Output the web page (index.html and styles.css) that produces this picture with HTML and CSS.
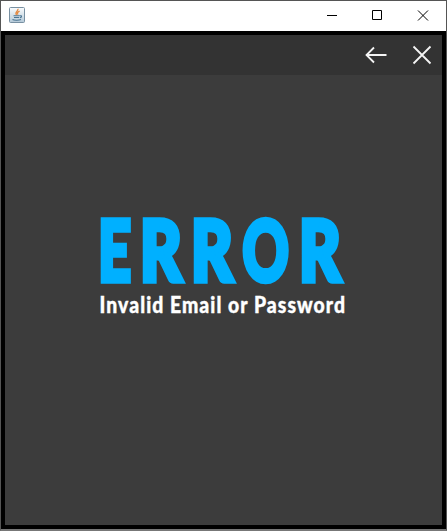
FILE: index.html
```html
<!DOCTYPE html>
<html lang="en">
<head>
<meta charset="utf-8">
<title>Error</title>
<link rel="stylesheet" href="styles.css">
</head>
<body>
<div class="window">
  <header class="titlebar">
    <svg class="app-icon" width="16" height="16" viewBox="0 0 16 16">
      <defs><linearGradient id="g" x2="0" y2="1"><stop stop-color="#fafcfd"/><stop offset="1" stop-color="#b4c9d8"/></linearGradient></defs>
      <rect x=".5" y=".5" width="15" height="15" rx="1" fill="url(#g)" stroke="#7890a2"/>
      <path d="M8.9 1.8C9.8 4 5.2 4.7 7.5 8M10.6 4.2C8 5.3 8 6.1 9 7.6" fill="none" stroke="#e48a42" stroke-width="1.3"/>
      <path d="M4.5 8.8h6.3M5 10.5h5.2M11 8.8c2.2-.5 1.8 1.5 0 2M3.5 12.6c2 1 6.5.8 8.5-.1" fill="none" stroke="#4b7592" stroke-width="1.1"/>
    </svg>
    <svg class="controls" width="110" height="30" viewBox="0 0 110 30" fill="none" stroke="#000">
      <path d="M0 14.5h10M45.5 9.5h9v9h-9zM91 9.500l10 10M101 9.500l-10 10"/>
    </svg>
  </header>
  <main class="panel">
    <nav class="toolbar">
      <svg width="70" height="40" viewBox="0 0 70 40" fill="none" stroke="#f5f5f5" stroke-width="1.8">
        <path d="M21.500 20H1.500M9 12.500L1.500 20l7.500 7.500M48.500 11.500l17 17M65.500 11.500l-17 17"/>
      </svg>
    </nav>
    <section class="message">
      <svg width="250" height="110" viewBox="0 0 250 110">
        <text class="headline" transform="translate(-.7 74.300) scale(.68 1)">E</text>
        <text class="headline" transform="translate(41 74.300) scale(.765 1)" x="0 66.700">RR</text>
        <text class="headline" transform="translate(143.500 74.300) scale(.68 1)">O</text>
        <text class="headline" transform="translate(200 74.300) scale(.765 1)">R</text>
        <text class="detail" transform="translate(.5 106) scale(.88 1)" textLength="279" lengthAdjust="spacing">Invalid Email or Password</text>
      </svg>
    </section>
  </main>
</div>
</body>
</html>
```
FILE: styles.css
```css
* { box-sizing: border-box; }
body { margin: 0; }
.window { width: 447px; height: 531px; border: 1px solid #555; border-bottom: 2px solid #777; background: #000; overflow: hidden; }
.titlebar { height: 30px; background: #fff; display: flex; justify-content: space-between; padding: 0 9px 0 8px; }
.app-icon { margin-top: 6px; }
.panel { margin: 4px; height: 490px; background: #3c3c3c; }
.toolbar { height: 40px; background: #333; display: flex; justify-content: flex-end; padding-right: 7px; }
.message { display: flex; justify-content: center; padding: 132px 0 0 0; }
.message svg { display: block; overflow: visible; }
.headline { font: 900 84px Lato, sans-serif; fill: #00b0ff; stroke: #00b0ff; stroke-width: 5.5px; }
.detail { font: 900 22px Lato, sans-serif; fill: #fff; stroke: #fff; stroke-width: .4px; }
```
